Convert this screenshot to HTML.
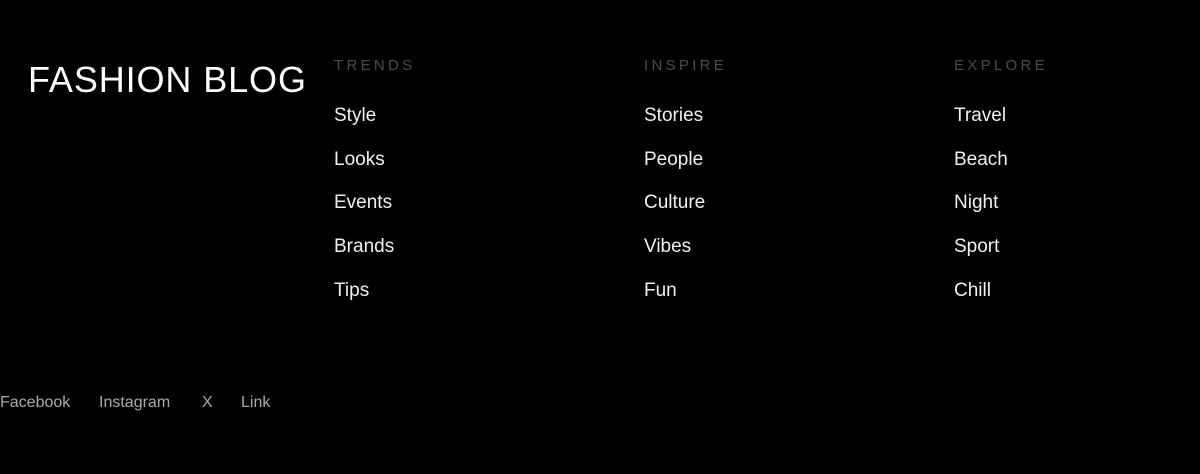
<!DOCTYPE html>
<html><head><style>
body{margin:0;background:#000;width:1200px;height:474px;overflow:hidden;font-family:"Liberation Sans",sans-serif;position:relative}
.logo{position:absolute;left:28px;top:59px;font-size:36px;color:#fff;line-height:42px;white-space:nowrap;letter-spacing:0.9px}
.col{position:absolute;top:0}
.h{position:absolute;top:57px;font-size:15px;letter-spacing:3.3px;color:#4a4a4a;white-space:nowrap;line-height:18px}
.l{position:absolute;font-size:19px;color:#f0f0f0;white-space:nowrap;line-height:22px}
.f{position:absolute;top:394px;font-size:16px;color:#aaa;line-height:18px;white-space:nowrap}
</style></head><body>
<div class="logo">FASHION BLOG</div>
<div class="col" style="left:334px">
<div class="h">TRENDS</div>
<div class="l" style="top:105px">Style</div>
<div class="l" style="top:149px">Looks</div>
<div class="l" style="top:192px">Events</div>
<div class="l" style="top:236px">Brands</div>
<div class="l" style="top:280px">Tips</div>
</div>
<div class="col" style="left:644px">
<div class="h">INSPIRE</div>
<div class="l" style="top:105px">Stories</div>
<div class="l" style="top:149px">People</div>
<div class="l" style="top:192px">Culture</div>
<div class="l" style="top:236px">Vibes</div>
<div class="l" style="top:280px">Fun</div>
</div>
<div class="col" style="left:954px">
<div class="h">EXPLORE</div>
<div class="l" style="top:105px">Travel</div>
<div class="l" style="top:149px">Beach</div>
<div class="l" style="top:192px">Night</div>
<div class="l" style="top:236px">Sport</div>
<div class="l" style="top:280px">Chill</div>
</div>
<div class="f" style="left:0">Facebook</div>
<div class="f" style="left:99px">Instagram</div>
<div class="f" style="left:202px">X</div>
<div class="f" style="left:241px">Link</div>
</body></html>
